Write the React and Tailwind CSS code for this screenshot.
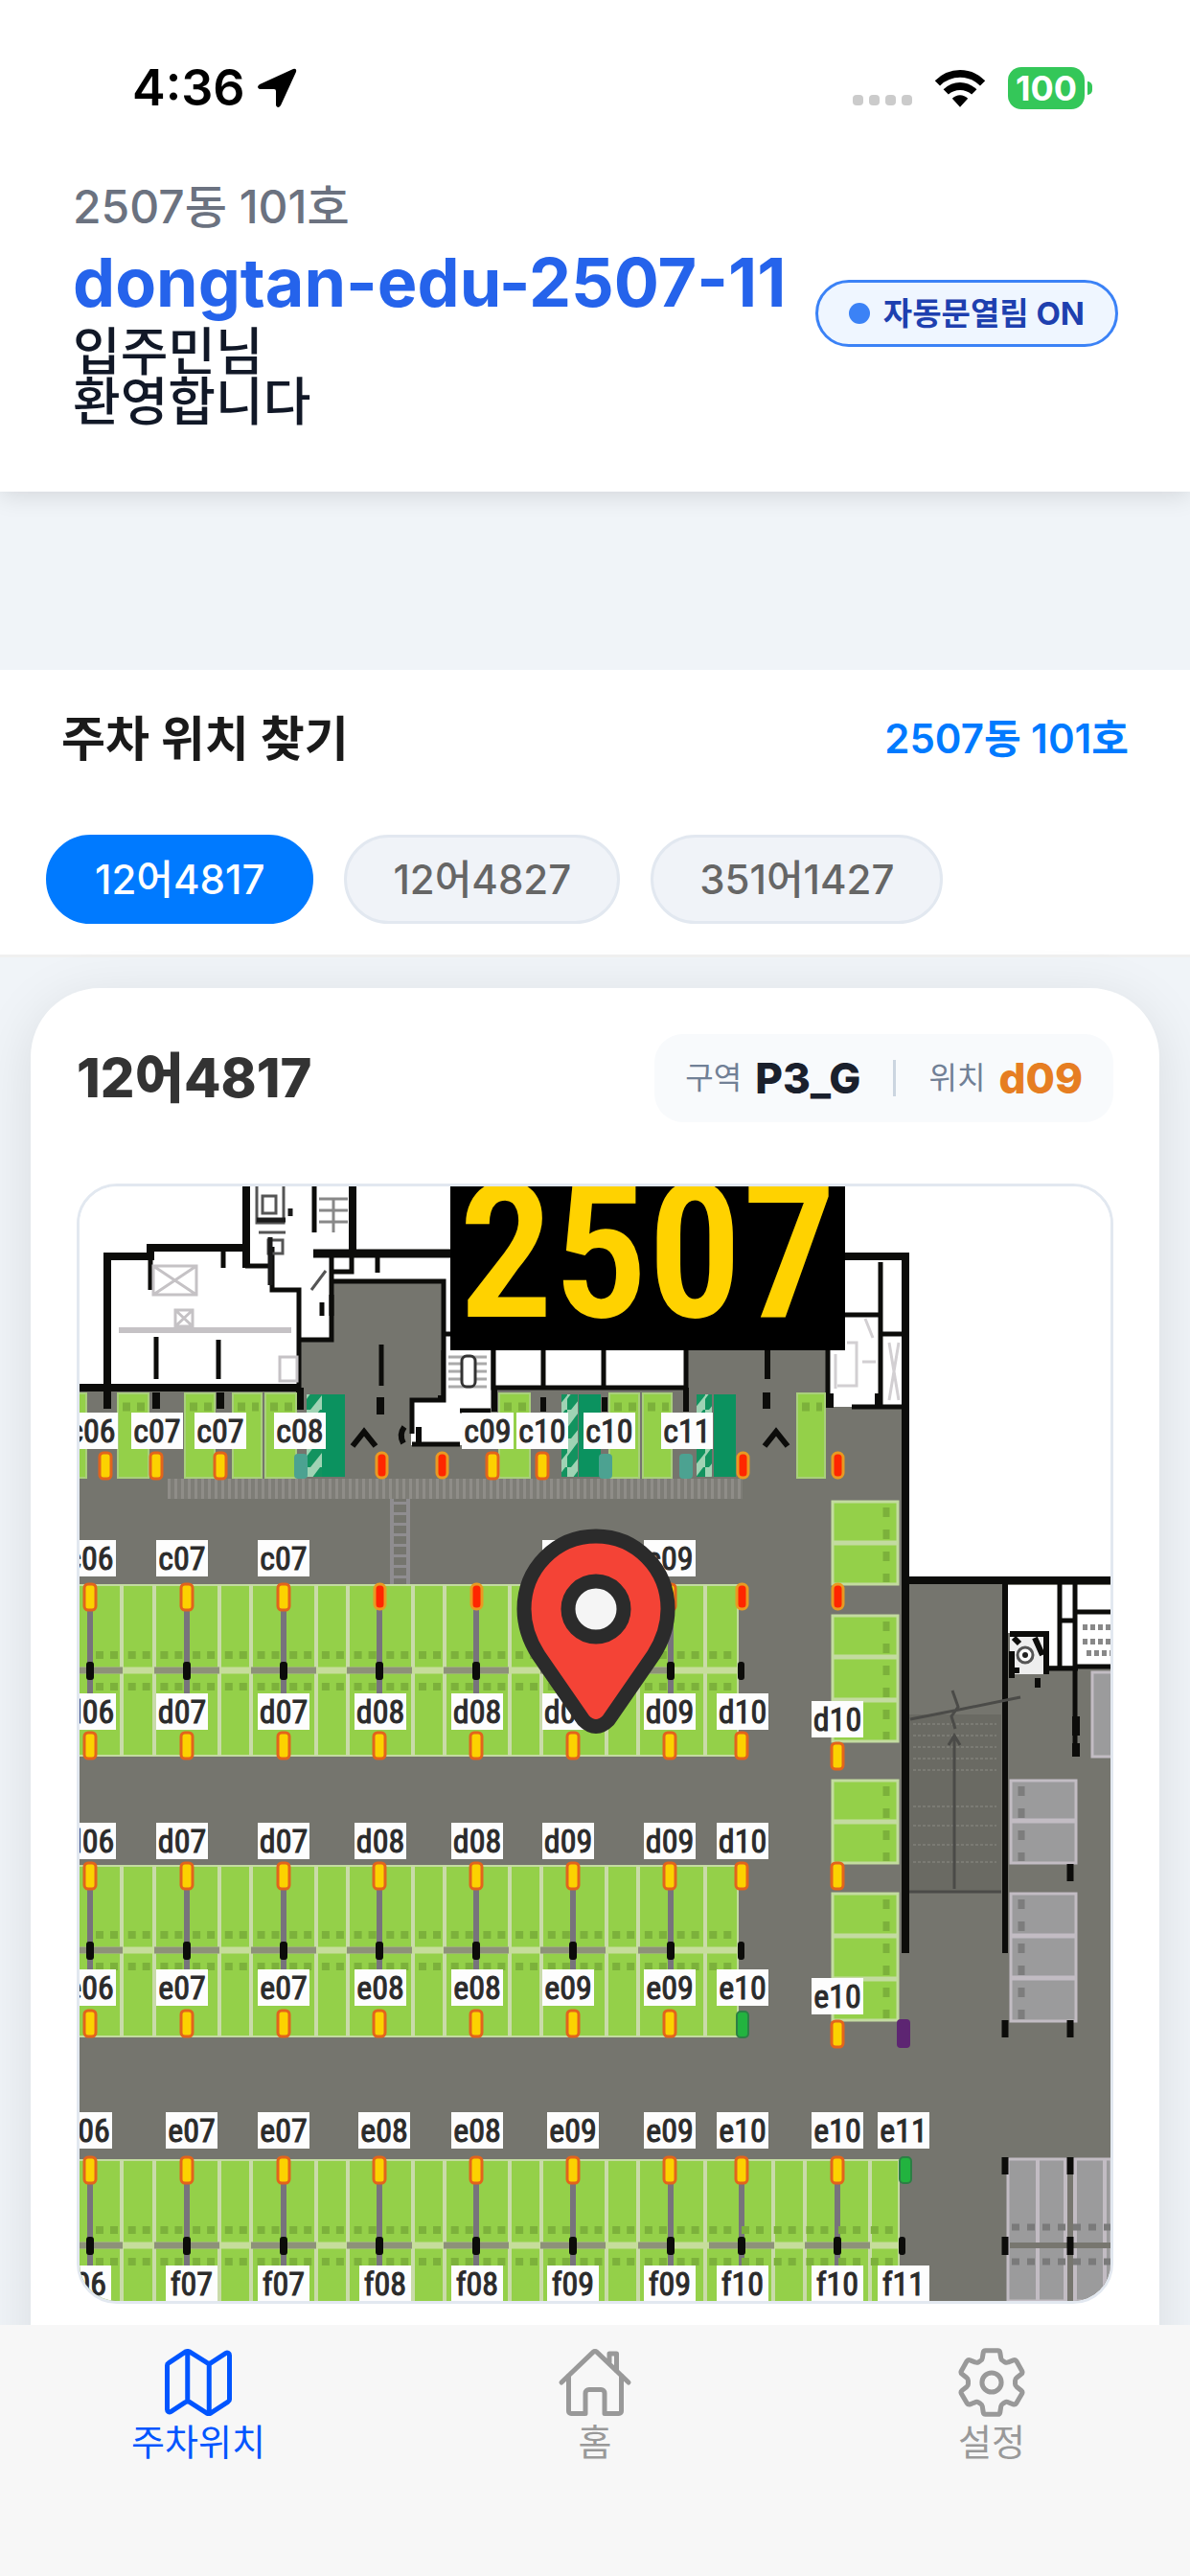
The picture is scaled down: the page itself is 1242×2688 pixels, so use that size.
import { useState } from "react";
import { IoMapOutline, IoHomeOutline } from "react-icons/io5";

const cars = ["12어4817", "12어4827", "351어1427"];

const GREEN = "#94d049";
const ASPHALT = "#75756e";

// bay separators shared by the three double rows
const dividers = [127, 161, 229, 262, 330, 363, 431, 464, 532, 565, 633, 666, 736];
const pillars = [94, 195, 296, 396, 497, 598, 700];

const labelRows = [
  { y: 1473, items: [["c06", 96], ["c07", 164], ["c07", 230], ["c08", 313], ["c09", 509], ["c10", 566], ["c10", 636], ["c11", 717]] },
  { y: 1606, items: [["c06", 94], ["c07", 190], ["c07", 296], ["c09", 593], ["c09", 699]] },
  { y: 1766, items: [["d06", 94], ["d07", 190], ["d07", 296], ["d08", 397], ["d08", 498], ["d09", 593], ["d09", 699], ["d10", 775]] },
  { y: 1774, items: [["d10", 874]] },
  { y: 1901, items: [["d06", 94], ["d07", 190], ["d07", 296], ["d08", 397], ["d08", 498], ["d09", 593], ["d09", 699], ["d10", 775]] },
  { y: 2054, items: [["e06", 94], ["e07", 190], ["e07", 296], ["e08", 397], ["e08", 498], ["e09", 593], ["e09", 699], ["e10", 775]] },
  { y: 2063, items: [["e10", 874]] },
  { y: 2203, items: [["e06", 90], ["e07", 200], ["e07", 296], ["e08", 401], ["e08", 498], ["e09", 598], ["e09", 699], ["e10", 775], ["e10", 874], ["e11", 943]] },
  { y: 2363, items: [["f06", 89], ["f07", 200], ["f07", 296], ["f08", 402], ["f08", 498], ["f09", 598], ["f09", 699], ["f10", 775], ["f10", 874], ["f11", 943]] },
];

const sensorRows = [
  { y: 1515, full: [110, 163, 230, 514, 566], free: [398, 461, 775, 874] },
  { y: 1652, full: [94, 195, 296, 699], free: [396, 497, 774, 874] },
  { y: 1807, full: [94, 195, 296, 396, 497, 598, 699, 774], free: [] },
  { y: 1818, full: [874], free: [] },
  { y: 1943, full: [94, 195, 296, 396, 497, 598, 699, 774, 874], free: [] },
  { y: 2097, full: [94, 195, 296, 396, 497, 598, 699], free: [] },
  { y: 2108, full: [874], free: [] },
  { y: 2250, full: [94, 195, 296, 396, 497, 598, 699, 774, 874], free: [] },
];

function DoubleRow({ top, mid, bottom, right, extraDividers = [], extraPillars = [] }) {
  const lines = [...dividers, ...extraDividers];
  return (
    <g>
      <rect x="82" y={top} width={right - 82} height={bottom - top} fill={GREEN} stroke="#c3dba0" strokeWidth="2" />
      {lines.map((x) => (
        <path key={x} d={`M${x} ${top}V${bottom}`} stroke="#c9dba9" strokeWidth="4" />
      ))}
      <path d={`M82 ${mid}H${right}`} stroke="#c6dd9b" strokeWidth="7" />
      {[...pillars, ...extraPillars].map((x) => (
        <g key={x}>
          <path d={`M${x - 34} ${mid}H${x + (x === 700 ? 0 : 34)}`} stroke="#8d9179" strokeWidth="7" />
          <path d={`M${x} ${top}V${mid + 24}`} stroke="#77737c" strokeWidth="6" />
          <rect x={x - 4} y={mid - 9} width="8" height="19" rx="3" fill="#0c0c0a" />
        </g>
      ))}
      <path
        d={`M100 ${mid - 16}H${right - 4}M100 ${mid + 17}H${right - 4}`}
        stroke="#7cb13b"
        strokeWidth="8"
        strokeDasharray="8 7 8 10.7"
      />
      <rect x={right} y={mid - 9} width="7" height="19" rx="3" fill="#0c0c0a" />
    </g>
  );
}

function BayColumn({ x, width, top, bottom, splits, fill, line, dot, dotX }) {
  return (
    <g>
      <rect x={x} y={top} width={width} height={bottom - top} fill={fill} stroke={line} strokeWidth="3" />
      {splits.map((y) => (
        <path key={y} d={`M${x} ${y}h${width}`} stroke={line} strokeWidth="5" />
      ))}
      <path d={`M${dotX} ${top + 6}V${bottom - 2}`} stroke={dot} strokeWidth="7" strokeDasharray="10 13" />
    </g>
  );
}

function ParkingMap() {
  return (
    <svg viewBox="82 1237 1078 1163" preserveAspectRatio="xMidYMid slice" className="block h-full w-full" role="img" aria-label="주차장 지도">
      <defs>
        <pattern id="treads" width="7" height="22" patternUnits="userSpaceOnUse">
          <rect width="7" height="22" fill="#7e7d77" />
          <rect width="3" height="22" fill="#8f8d88" />
        </pattern>
        <pattern id="hatch" width="16" height="30" patternUnits="userSpaceOnUse">
          <rect width="16" height="30" fill="#9fd3b4" />
          <path d="M-4 24L20 -8V10L-4 40z" fill="#12935f" />
        </pattern>
      </defs>

      <rect x="82" y="1237" width="1078" height="1163" fill="#fff" />
      <path d="M82 1447H313V1398H346V1337H461V1447H716V1400H864V1467H944V1648H1160V2400H82z" fill={ASPHALT} />

      {/* upper left building */}
      <g fill="none" stroke="#0c0c0a">
        <path d="M82 1447H313M112 1465V1310H157V1301H260" strokeWidth="8" />
        <path d="M257 1237V1322M368 1237V1307" strokeWidth="8" />
        <path d="M328 1237V1285" strokeWidth="5" />
        <path d="M327 1307H470" strokeWidth="9" />
        <path d="M312 1470V1345H284V1300M256 1320H282M157 1305V1345M233 1301V1322M394 1307V1327M367 1307V1326H346" strokeWidth="5" />
        <path d="M346 1310V1397H313M346 1336H463V1470" strokeWidth="5" />
        <path d="M163 1394V1438M228 1397V1438M398 1402V1445" strokeWidth="5" />
        <path d="M112 1447V1469M163 1452V1469M230 1452V1469M313 1447V1470M397 1457V1475M461 1455V1473" strokeWidth="8" />
        <path d="M346 1350V1372M336 1358V1372" strokeWidth="5" />
      </g>
      <g fill="none" stroke="#aaa6aa" strokeWidth="3">
        <path d="M124 1387H304" strokeWidth="6" stroke="#c5c2c5" />
        <path d="M160 1320H205V1350H160zM160 1320L205 1350M205 1320L160 1350M183 1366h18v17h-18zM183 1366l18 17m0-17l-18 17M292 1415h18v25h-18z" stroke="#c5c2c5" />
        <path d="M268 1237V1275H296V1237M274 1247h14v18h-14zM270 1285h28M280 1293h15v14h-15zM325 1345L340 1325" stroke="#555" />
        <path d="M333 1250h30M333 1262h30M333 1274h30M348 1250v35" stroke="#888" />
      </g>
      <path d="M268 1272H298M282 1290V1340M303 1260V1268" stroke="#1b1b1b" strokeWidth="5" />

      {/* stair core and shops */}
      <rect x="463" y="1408" width="52" height="62" fill="#fff" />
      <path d="M429 1460H464V1470H482V1507H429z" fill="#fff" />
      <path d="M430 1495V1460H463V1408M515 1408V1470M463 1391H470M430 1506H480M480 1471H512" fill="none" stroke="#0c0c0a" strokeWidth="5" />
      <path d="M468 1415h40M468 1422h40M468 1430h40M468 1438h40M468 1446h40" stroke="#aaa" strokeWidth="3" />
      <rect x="482" y="1414" width="14" height="32" rx="5" fill="#fff" stroke="#333" strokeWidth="3" />
      <path d="M422 1488q-6 8-1 17M437 1488v17" stroke="#0c0c0a" strokeWidth="6" fill="none" />
      <rect x="515" y="1400" width="201" height="47" fill="#fff" />
      <path d="M515 1400V1447H716V1400M567 1400V1447M630 1400V1447" fill="none" stroke="#0c0c0a" strokeWidth="5" />
      <path d="M516 1447V1472M567 1457V1472M631 1457V1472M716 1447V1472M801 1400V1438" stroke="#0c0c0a" strokeWidth="6" />
      <path d="M800 1452V1469" stroke="#0c0c0a" strokeWidth="8" />

      {/* upper right building */}
      <rect x="864" y="1310" width="79" height="157" fill="#fff" />
      <g fill="none" stroke="#0c0c0a">
        <path d="M875 1310H945V2037M944 1648H1160" strokeWidth="8" />
        <path d="M864 1400V1468M919 1316V1467M880 1371H919M919 1391H941M889 1467H941" strokeWidth="5" />
        <path d="M866 1453V1468M917 1453V1468" strokeWidth="8" />
        <path d="M1049 1650V2037" strokeWidth="6" />
      </g>
      <path d="M872 1412v36M884 1400h10v45h-20M900 1420h14M903 1375l8 20M928 1400l10 60M938 1400l-10 60" stroke="#d2cfd2" strokeWidth="3" fill="none" />

      {/* row C */}
      {[[82, 8], [123, 32], [193, 31], [243, 30], [277, 32], [521, 32], [636, 31], [671, 30], [832, 29]].map(([x, w]) => (
        <g key={x}>
          <rect x={x} y="1453" width={w} height="88" fill={GREEN} stroke="#a9cf7c" strokeWidth="2" />
          {w > 8 && <path d={`M${x + 5} 1467h${w - 8}`} stroke="#7cb13b" strokeWidth="9" strokeDasharray="8 7" />}
        </g>
      ))}
      {[[320, 16, 336, 24], [586, 17, 604, 23], [727, 16, 745, 23]].map(([x, w, sx, sw]) => (
        <g key={x}>
          <rect x={x} y="1454" width={w} height="86" fill="url(#hatch)" />
          <rect x={sx} y="1454" width={sw} height="86" fill="#0b925f" />
        </g>
      ))}
      <rect x="307" y="1516" width="14" height="26" rx="4" fill="#4ca291" />
      <rect x="625" y="1516" width="14" height="26" rx="4" fill="#4ca291" />
      <rect x="709" y="1516" width="14" height="26" rx="4" fill="#4ca291" />
      <path d="M368 1508L380 1493L392 1508M798 1508L810 1493L822 1508" fill="none" stroke="#0c0c0a" strokeWidth="6" />
      <rect x="175" y="1542" width="600" height="21" fill="url(#treads)" />
      <path d="M409 1563V1652M426 1563V1652" stroke="#8f8d90" strokeWidth="4" />
      <path d="M417 1566V1652" stroke="#8f8d90" strokeWidth="14" strokeDasharray="3 8" />

      <DoubleRow top={1653} mid={1742} bottom={1831} right={770} />
      <DoubleRow top={1946} mid={2034} bottom={2124} right={770} />
      <DoubleRow top={2253} mid={2342} bottom={2410} right={938} extraDividers={[807, 840, 908]} extraPillars={[774, 874]} />

      {/* right hand bays */}
      {[[1566, 1652, [1609]], [1685, 1816, [1728, 1773]], [1857, 1943, [1900]], [1975, 2107, [2019, 2064]]].map(([top, bottom, splits]) => (
        <BayColumn key={top} x={869} width={68} top={top} bottom={bottom} splits={splits} fill={GREEN} line="#c3dba0" dot="#7cb13b" dotX={925} />
      ))}
      {[[1857, 1943, [1899]], [1975, 2108, [2019, 2063]]].map(([top, bottom, splits]) => (
        <BayColumn key={top} x={1055} width={68} top={top} bottom={bottom} splits={splits} fill="#9b9b9c" line="#c2bcc3" dot="#7d7d7d" dotX={1066} />
      ))}
      <BayColumn x={1140} width={40} top={1744} bottom={1832} splits={[]} fill="#9b9b9c" line="#c2bcc3" dot="#9b9b9c" dotX={1148} />
      <rect x="1052" y="2252" width="108" height="148" fill="#9b9b9c" stroke="#c2bcc3" strokeWidth="3" />
      <path d="M1083 2252V2400M1112 2252V2400M1122 2252V2400M1153 2252V2400" stroke="#c2bcc3" strokeWidth="4" />
      <path d="M1054 2342H1160M1117 2252V2400" stroke="#77766f" strokeWidth="6" />
      <path d="M1056 2323H1160M1056 2359H1160" stroke="#7a7a7a" strokeWidth="7" strokeDasharray="8 8" />
      <path d="M1049 2250v18M1117 2250v18M1049 2333v19M1117 2333v19M1117 1944v18M1049 2107v18M1117 2107v18" stroke="#0c0c0a" strokeWidth="7" />

      {/* ramp */}
      <rect x="949" y="1788" width="96" height="185" fill="#6a6a63" />
      <path d="M953 1798H1040M953 1810H1040M953 1822H1040M953 1834H1040M953 1846H1040M953 1884H1040M953 1904H1040M953 1924H1040M953 1942H1040" stroke="#7b7b74" strokeWidth="2" strokeDasharray="3 2" />
      <path d="M949 1973H1045M996 1970V1812M990 1820L996 1810L1002 1820M950 1793L996 1784L1065 1770M994 1763L1000 1780L993 1790L997 1803" fill="none" stroke="#4b4b48" strokeWidth="3" />

      {/* elevator hall */}
      <path d="M1052 1653H1160V1737H1093V1703H1052z" fill="#fff" />
      <path d="M1106 1652V1740M1122 1652V1832M1106 1690H1122M1122 1681H1160M1092 1740H1125M1122 1738H1160" fill="none" stroke="#0c0c0a" strokeWidth="5" />
      <path d="M1054 1703H1092V1746H1054z" fill="#eee" />
      <path d="M1054 1704H1092V1746M1056 1722V1750M1058 1708l6 6M1080 1708l8 18M1064 1742h-8M1083 1750v10" fill="none" stroke="#0c0c0a" strokeWidth="6" />
      <circle cx="1070" cy="1726" r="8" fill="#fff" stroke="#555" strokeWidth="3" />
      <circle cx="1070" cy="1726" r="3" fill="#222" />
      <path d="M1130 1697h30M1130 1712h30M1134 1724h26" stroke="#888" strokeWidth="6" strokeDasharray="5 3" />
      <path d="M1123 1790v20M1123 1818v14" stroke="#0c0c0a" strokeWidth="8" />

      {sensorRows.map((row) => (
        <g key={row.y}>
          {row.full.map((x) => (
            <rect key={x} x={x - 6} y={row.y} width="12" height="27" rx="4" fill="#fcd200" stroke="#e2641c" strokeWidth="3" />
          ))}
          {row.free.map((x) => (
            <rect key={x} x={x - 5} y={row.y} width="11" height="26" rx="5" fill="#ff2600" stroke="#e99a22" strokeWidth="3" />
          ))}
        </g>
      ))}
      <rect x="769" y="2098" width="12" height="27" rx="4" fill="#22b33f" stroke="#2c7f45" strokeWidth="2" />
      <rect x="939" y="2250" width="12" height="27" rx="4" fill="#22b33f" stroke="#2c7f45" strokeWidth="2" />
      <rect x="936" y="2106" width="14" height="30" rx="4" fill="#5d2572" />

      {labelRows.map((row) =>
        row.items.map(([text, x]) => (
          <g key={`${row.y}-${x}`}>
            <rect x={x - 27} y={row.y} width="54" height="38" fill="#fdfdfd" />
            <text x={x} y={row.y + 31} textAnchor="middle" className="fill-[#2b2b2b] stroke-[#2b2b2b] font-['Roboto_Condensed','Liberation_Sans',sans-serif] text-[34px] font-normal">
              {text}
            </text>
          </g>
        ))
      )}

      <rect x="470" y="1200" width="412" height="208" fill="#000" />
      <text x="676" y="1373" textAnchor="middle" className="fill-[#ffd200] font-['Roboto_Condensed','Liberation_Sans',sans-serif] text-[196px] font-semibold">
        2507
      </text>

      {/* my car */}
      <path
        d="M622 1602C580 1602 547 1636 547 1678C547 1697 553 1712 562 1726L609 1794Q622 1807 635 1794L682 1726C691 1712 697 1697 697 1678C697 1636 664 1602 622 1602z"
        fill="#f44336"
        stroke="#2b2b2b"
        strokeWidth="15"
        strokeLinejoin="round"
      />
      <circle cx="622" cy="1678" r="29" fill="#f5f5f5" stroke="#2b2b2b" strokeWidth="15" />
    </svg>
  );
}

function GearIcon() {
  return (
    <svg viewBox="136 48 238 238" className="size-20" fill="none" stroke="currentColor" strokeWidth="15" strokeLinejoin="round" aria-hidden="true">
      <path d="M236 68H274Q280 68 281 74L284 92Q285 98 290 100L296 104Q301 107 307 104L322 98Q328 96 332 101L349 131Q352 137 347 141L333 152Q328 156 328 161V172Q328 177 333 181L347 192Q352 196 349 202L332 231Q328 237 322 235L307 229Q301 226 296 229L290 233Q285 236 284 241L281 260Q280 266 274 266H236Q230 266 229 260L226 241Q225 236 220 233L214 229Q209 226 203 229L188 235Q182 237 178 231L161 202Q158 196 163 192L177 181Q182 177 182 172V161Q182 156 177 152L163 141Q158 137 161 131L178 101Q182 96 188 98L203 104Q209 107 214 104L220 100Q225 98 226 92L229 74Q230 68 236 68z" />
      <circle cx="255" cy="167" r="30" />
    </svg>
  );
}

function StatusBar() {
  return (
    <div className="flex items-center justify-between pt-[60px] pr-[102px] pl-[138px] text-black">
      <div className="flex items-center gap-3">
        <span className="text-[52px] leading-[64px] font-semibold">4:36</span>
        <svg viewBox="0 0 42 42" className="size-[42px]" aria-hidden="true">
          <path d="M38 1Q42 0 41 4L25 39Q22 43 20 39V24Q20 22 18 22H3Q-1 20 3 17z" fill="currentColor" />
        </svg>
      </div>
      <div className="flex items-center gap-[23px]">
        <div className="flex gap-[6px] pt-6">
          <i className="size-[11px] rounded-[4px] bg-[#cbcbcb]" />
          <i className="size-[11px] rounded-[4px] bg-[#cbcbcb]" />
          <i className="size-[11px] rounded-[4px] bg-[#cbcbcb]" />
          <i className="size-[11px] rounded-[4px] bg-[#cbcbcb]" />
        </div>
        <svg viewBox="346 64 162 122" className="h-10 w-[54px]" aria-hidden="true">
          <path d="M347 101Q382 67 427 67T507 101L491 117Q463 91 427 91T363 117zM374 129Q398 107 427 107T480 129L464 145Q448 131 427 131T390 145zM402 158Q413 147 427 147T452 158L427 185z" fill="currentColor" />
        </svg>
        <div className="flex items-center gap-[3px]">
          <span className="flex h-[44px] w-20 items-center justify-center rounded-[14px] bg-[#34c759] text-[36px] leading-[44px] font-bold text-white">100</span>
          <i className="h-[14px] w-[5px] rounded-r-full bg-[#34c759]" />
        </div>
      </div>
    </div>
  );
}

export default function App() {
  const [selected, setSelected] = useState(cars[0]);

  return (
    <div className="flex h-screen flex-col overflow-hidden bg-[#f0f4f8] font-['Inter','Noto_Sans_CJK_KR',sans-serif]">
      <header className="relative z-10 bg-white pb-[43px] shadow-[0_4px_24px_rgba(0,0,0,0.12)]">
        <StatusBar />
        <div className="flex items-center justify-between pt-[60px] pr-[75px] pl-[76px]">
          <div className="pb-6">
            <p className="text-[48px] leading-[64px] font-medium text-[#6b7280]">2507동 101호</p>
            <h1 className="text-[54px] leading-[52px] font-medium text-[#111827]">
              <span className="block text-[70px] leading-[94px] font-bold text-[#2563eb]">dongtan-edu-2507-11</span>
              입주민님
              <br />
              환영합니다
            </h1>
          </div>
          <button type="button" className="flex h-[70px] items-center gap-[14px] rounded-full border-[3px] border-[#3b82f6] bg-[#eff6ff] px-8 text-[33px] leading-[40px] font-bold whitespace-nowrap text-[#1e40af]">
            <i className="size-[22px] rounded-full bg-[#3b82f6]" />
            자동문열림 ON
          </button>
        </div>
      </header>

      <main className="min-h-0 flex-1 overflow-hidden pt-[186px]">
        <section className="border-b-[3px] border-[#f0f0f0] bg-white px-12 pt-10 pb-8">
          <div className="flex items-center justify-between px-4">
            <h2 className="text-[50px] leading-[64px] font-bold text-[#1a1a1a]">주차 위치 찾기</h2>
            <span className="text-[42px] leading-[64px] font-semibold text-[#007aff]">2507동 101호</span>
          </div>
          <div className="flex gap-8 pt-[68px]">
            {cars.map((car) => (
              <button
                key={car}
                type="button"
                aria-pressed={car === selected}
                onClick={() => setSelected(car)}
                className={
                  car === selected
                    ? "h-[93px] rounded-full border-[3px] border-[#007aff] bg-[#007aff] px-12 text-[42px] font-medium text-white"
                    : "h-[93px] rounded-full border-[3px] border-[#e2e8f0] bg-[#f0f3f8] px-12 text-[42px] font-medium text-[#666]"
                }
              >
                {car}
              </button>
            ))}
          </div>
        </section>

        <section className="mx-8 mt-8 rounded-[72px] bg-white px-12 pt-12 pb-40 shadow-[0_12px_60px_rgba(0,0,0,0.1)]">
          <div className="flex items-center justify-between">
            <h3 className="text-[56px] leading-[92px] font-extrabold text-[#333]">{selected}</h3>
            <dl className="flex h-[92px] items-center gap-[14px] rounded-[30px] bg-[#f8fafc] px-8">
              <dt className="text-[32px] text-[#718096]">구역</dt>
              <dd className="text-[44px] font-extrabold text-[#1a202c]">P3_G</dd>
              <i className="mx-5 h-[38px] w-[3px] bg-[#cbd5e0]" />
              <dt className="text-[32px] text-[#718096]">위치</dt>
              <dd className="text-[44px] font-extrabold text-[#e67e22]">d09</dd>
            </dl>
          </div>
          <div className="mt-16 aspect-[1082/1169] overflow-hidden rounded-[42px] border-[3px] border-[#e2e8f0]">
            <ParkingMap />
          </div>
        </section>
      </main>

      <nav className="relative z-10 grid grid-cols-3 bg-[#f7f7f7] pt-5 pb-[118px]">
        <a href="#map" aria-current="page" className="flex flex-col items-center text-[#0055ff]">
          <IoMapOutline className="size-20" />
          <span className="text-[38px] leading-[44px]">주차위치</span>
        </a>
        <a href="#home" className="flex flex-col items-center text-[#999]">
          <IoHomeOutline className="size-20" />
          <span className="text-[38px] leading-[44px]">홈</span>
        </a>
        <a href="#settings" className="flex flex-col items-center text-[#999]">
          <GearIcon />
          <span className="text-[38px] leading-[44px]">설정</span>
        </a>
      </nav>
    </div>
  );
}
